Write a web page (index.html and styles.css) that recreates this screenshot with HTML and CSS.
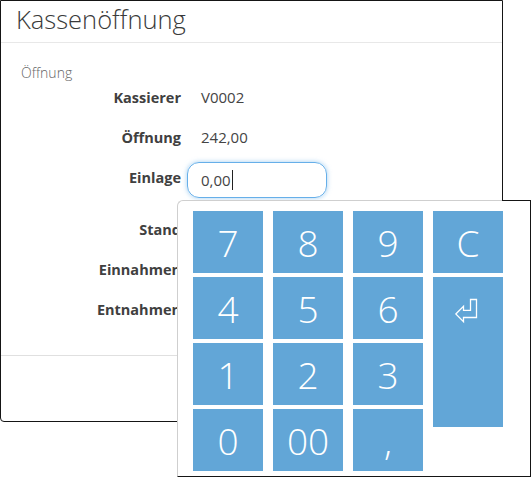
FILE: index.html
```html
<!DOCTYPE html>
<html lang="de">
<head>
<meta charset="utf-8">
<title>Kassenöffnung</title>
<link rel="stylesheet" href="styles.css">
</head>
<body>
<div class="modal">
  <div class="modal-header">
    <h1 class="title">Kassenöffnung</h1>
  </div>
  <div class="modal-body">
    <div class="legend">Öffnung</div>
    <div class="form">
      <div class="row"><span class="label">Kassierer</span><span class="value">V0002</span></div>
      <div class="row"><span class="label">Öffnung</span><span class="value">242,00</span></div>
      <div class="row row-input"><span class="label">Einlage</span><div class="input">0,00<span class="caret"></span></div></div>
      <div class="row row-gap"><span class="label">Stand</span></div>
      <div class="row"><span class="label">Einnahmen</span></div>
      <div class="row"><span class="label">Entnahmen</span></div>
    </div>
  </div>
  <div class="modal-footer"></div>
</div>

<div class="keypad">
  <div class="keys">
    <div class="key">7</div>
    <div class="key">8</div>
    <div class="key">9</div>
    <div class="key">C</div>
    <div class="key">4</div>
    <div class="key">5</div>
    <div class="key">6</div>
    <div class="key key-enter">
      <svg class="enter-icon" width="24" height="26" viewBox="0 0 24 26" aria-hidden="true">
        <path d="M0.8 16 L8.5 8.3 L8.5 12.3 L15.5 12.3 L15.5 1.5 L21.5 1.5 L21.5 19.5 L8.5 19.5 L8.5 23.7 Z" fill="none" stroke="#fff" stroke-width="1.3" stroke-linejoin="miter"/>
      </svg>
    </div>
    <div class="key">1</div>
    <div class="key">2</div>
    <div class="key">3</div>
    <div class="key">0</div>
    <div class="key">00</div>
    <div class="key">,</div>
  </div>
</div>
</body>
</html>
```

FILE: styles.css
```css
html, body {
  margin: 0;
  padding: 0;
  background: #fff;
}

body {
  font-family: "Open Sans", "DejaVu Sans", sans-serif;
  color: #333;
  width: 532px;
  height: 479px;
  position: relative;
  overflow: hidden;
}

.modal {
  box-sizing: border-box;
  width: 503px;
  height: 422px;
  border: 1px solid #151515;
  border-radius: 0 0 0 4px;
  background: #fff;
  display: flex;
  flex-direction: column;
}

.modal-header {
  height: 41px;
  border-bottom: 1px solid #e8e8e8;
  padding-left: 15px;
  display: flex;
  align-items: center;
}

.title {
  margin: 0;
  font-size: 25.5px;
  font-weight: 300;
  color: #3a3a3a;
  line-height: 1;
  position: relative;
  top: -2px;
}

.modal-body {
  height: 312px;
  border-bottom: 1px solid #e0e0e0;
  padding: 0;
}

.legend {
  margin: 20px 0 0 20px;
  font-size: 14px;
  color: #666;
  font-weight: 300;
  line-height: 19px;
}

.form {
  display: flex;
  flex-direction: column;
  margin-top: -5px;
}

.row {
  display: grid;
  grid-template-columns: 180px auto;
  column-gap: 20px;
  align-items: center;
  height: 40px;
}

.row-input {
  column-gap: 6px;
}

.row-gap {
  margin-top: 12px;
}

.label {
  text-align: right;
  font-weight: 700;
  font-size: 14.5px;
  color: #404040;
  white-space: nowrap;
}

.value {
  font-size: 15px;
  color: #444;
}

.input {
  box-sizing: border-box;
  width: 140px;
  height: 36px;
  border: 1px solid #66afe9;
  border-radius: 12px;
  box-shadow: 0 0 5px rgba(102, 175, 233, 0.6);
  padding-left: 13px;
  font-size: 15px;
  color: #444;
  display: flex;
  align-items: center;
  position: relative;
  top: 3px;
}

.caret {
  display: inline-block;
  width: 1px;
  height: 20px;
  background: #222;
  margin-left: 1px;
}

.modal-footer {
  flex: 1;
}

.keypad {
  position: absolute;
  left: 177px;
  top: 200px;
  width: 354px;
  height: 277px;
  box-sizing: border-box;
  background: #fff;
  border-top: 1px solid #cfcfcf;
  border-left: 1px solid #cfcfcf;
  border-right: 1px solid #151515;
  border-bottom: 1px solid #151515;
  border-top-left-radius: 6px;
  padding: 10px 0 0 15px;
}

.keypad::before {
  content: "";
  position: absolute;
  top: -1px;
  left: 324px;
  right: -1px;
  height: 1px;
  background: #151515;
}

.keys {
  display: grid;
  grid-template-columns: repeat(4, 70px);
  grid-template-rows: repeat(4, 62px);
  column-gap: 10px;
  row-gap: 4px;
}

.key {
  background: #62a6d7;
  color: #fff;
  font-size: 37px;
  font-weight: 300;
  display: flex;
  align-items: center;
  justify-content: center;
  line-height: 1;
}

.key-enter {
  grid-column: 4;
  grid-row: 2 / span 3;
  height: 150px;
  align-items: flex-start;
  padding-top: 21px;
  box-sizing: border-box;
}

.enter-icon {
  display: block;
  margin-left: -2px;
}
```
